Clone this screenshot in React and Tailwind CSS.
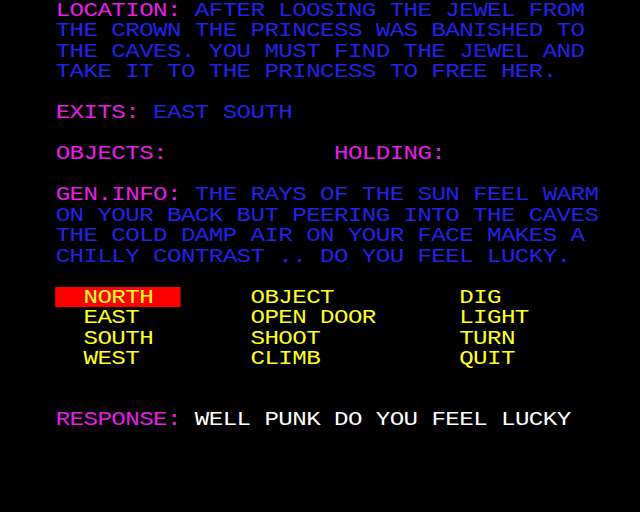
export default function App() {
  const M = "text-[#e81ee8]";
  const B = "text-[#2222e6]";
  const Y = "text-[#ffff22]";
  const W = "text-white";
  const rows = [
    [["    ", W], ["LOCATION: ", M], ["AFTER LOOSING THE JEWEL FROM", B]],
    [["    ", W], ["THE CROWN THE PRINCESS WAS BANISHED TO", B]],
    [["    ", W], ["THE CAVES. YOU MUST FIND THE JEWEL AND", B]],
    [["    ", W], ["TAKE IT TO THE PRINCESS TO FREE HER.", B]],
    [],
    [["    ", W], ["EXITS: ", M], ["EAST SOUTH", B]],
    [],
    [["    ", W], ["OBJECTS:            HOLDING:", M]],
    [],
    [["    ", W], ["GEN.INFO: ", M], ["THE RAYS OF THE SUN FEEL WARM", B]],
    [["    ", W], ["ON YOUR BACK BUT PEERING INTO THE CAVES", B]],
    [["    ", W], ["THE COLD DAMP AIR ON YOUR FACE MAKES A", B]],
    [["    ", W], ["CHILLY CONTRAST .. DO YOU FEEL LUCKY.", B]],
    [],
    "menu",
    [["      EAST        OPEN DOOR      LIGHT", Y]],
    [["      SOUTH       SHOOT          TURN", Y]],
    [["      WEST        CLIMB          QUIT", Y]],
    [],
    [],
    [["    ", W], ["RESPONSE: ", M], ["WELL PUNK DO YOU FEEL LUCKY", W]],
  ];
  return (
    <div className="w-[640px] h-[512px] bg-black overflow-hidden">
      <div
        className="w-[556.52px] origin-top-left scale-x-[1.15] pt-[1px] text-[21px] tracking-[-0.502px] leading-[20.48px] whitespace-pre"
        style={{ fontFamily: '"Liberation Mono", monospace' }}
      >
        {rows.map((r, i) =>
          r === "menu" ? (
            <div key={i} className="h-[20.48px] flex items-stretch">
              <span>{"    "}</span>
              <span className={"bg-[#ff0000] inline-block h-[20.48px] -mt-[1px] pt-[1px] " + Y}>{"  NORTH  "}</span>
              <span className={Y}>{"     OBJECT         DIG"}</span>
            </div>
          ) : (
            <div key={i} className="h-[20.48px]">
              {r.map(([t, c], j) => (
                <span key={j} className={c}>
                  {t}
                </span>
              ))}
            </div>
          )
        )}
      </div>
    </div>
  );
}
